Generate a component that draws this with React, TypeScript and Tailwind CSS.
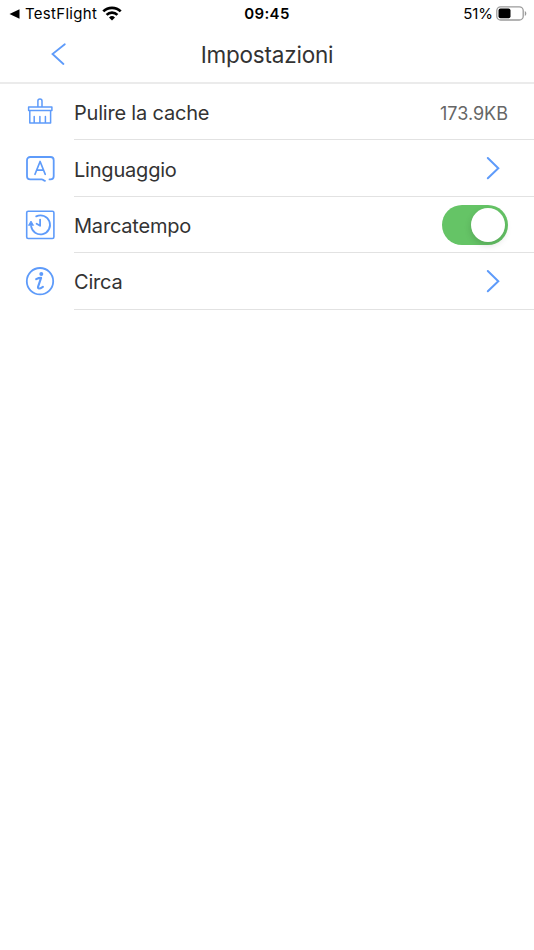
import { useState } from "react";
import type { ReactNode } from "react";

const BrushIcon = () => (
  <svg className="w-8 h-8" viewBox="0 0 32 32" fill="none" stroke="#5e9bfa" strokeWidth="1.5" strokeLinejoin="round" strokeLinecap="round">
    <path d="M13.900 11V5a2.050 2.050 0 0 1 4.100 0v6M4.600 11h23.300v3.500H4.600zM5.800 14.500V27h20.800V14.500M10.200 20.500v6M15.900 20.500v6M21.400 20.500v6" />
  </svg>
);

const LanguageIcon = () => (
  <svg className="w-8 h-8" viewBox="0 0 32 32" fill="none" stroke="#5e9bfa" strokeWidth="1.8" strokeLinejoin="round" strokeLinecap="round">
    <path d="M25.500 27.400h1a3.200 3.200 0 0 0 3.200-3.200V8.200A3.200 3.200 0 0 0 26.500 5H6.200A3.200 3.200 0 0 0 3 8.200v16a3.200 3.200 0 0 0 3.200 3.200h11.500c1.500 0 1.800 1.300 3.300 1.400" />
    <path d="M11 22.300l5.100-12.800 5.100 12.800M12.700 18.200h6.800" strokeWidth="1.700" />
  </svg>
);

const ClockIcon = () => (
  <svg className="w-8 h-8" viewBox="0 0 32 32" fill="none" stroke="#5e9bfa" strokeWidth="1.6" strokeLinejoin="round" strokeLinecap="round">
    <rect x="2.700" y="2.300" width="27.200" height="27.200" rx="1.500" />
    <path d="M12.200 7.400A9.500 9.500 0 1 1 7.100 17.100" strokeWidth="1.800" />
    <path d="M4.600 16.100l2.400-4.100 2.400 4.100z" fill="#5e9bfa" strokeWidth="0.800" />
    <path d="M16.100 10.600v6.200l-3.500-2" strokeWidth="1.800" />
  </svg>
);

const InfoIcon = () => (
  <svg className="w-8 h-8" viewBox="0 0 32 32" fill="none" stroke="#5e9bfa" strokeWidth="1.800" strokeLinejoin="round" strokeLinecap="round">
    <circle cx="16" cy="16.200" r="13.200" />
    <circle cx="17.300" cy="8.900" r="2" fill="#5e9bfa" stroke="none" />
    <path d="M12.200 14.200c1.600-.9 3.300-1.300 4.900-1.300l-3 8.700c-.6 2.300 1 2.700 4.800.2" strokeWidth="2.100" />
  </svg>
);

const Chevron = () => (
  <svg className="w-4 h-6 mr-[7px]" viewBox="0 0 16 24" fill="none" stroke="#5e9bfa" strokeWidth="2" strokeLinecap="round">
    <path d="M2.800 2l10.500 10.200L2.800 22.300" />
  </svg>
);

const Row = ({ icon, label, children }: { icon: ReactNode; label: string; children: ReactNode }) => (
  <li className="flex h-[56.400px] pl-6">
    <div className="w-[50px] pt-3 shrink-0">{icon}</div>
    <div className="flex flex-1 items-center justify-between border-b border-[#e2e2e2] pr-[26px]">
      <span className="text-[20px] tracking-[-0.200px] text-[#333] pt-[3px]">{label}</span>
      {children}
    </div>
  </li>
);

const StatusBar = () => (
  <div className="grid grid-cols-3 items-center h-7 pl-[9px] pr-[7px] text-black">
    <div className="flex items-center">
      <svg className="w-[11px] h-[10px] mr-[5px]" viewBox="0 0 11 10">
        <path d="M.5 5L10.500.3v9.400z" />
      </svg>
      <span className="text-[15px] tracking-[0.300px]">TestFlight</span>
      <svg className="w-5 h-[15px] ml-[5px] -mt-0.5" viewBox="0 0 20 15" fill="none" stroke="#000" strokeWidth="2.700">
        <path d="M1.300 5.400a12.300 12.300 0 0 1 17.400 0M4.600 8.900a7.700 7.700 0 0 1 10.800 0" />
        <path d="M10 14.500l-3-3a4.300 4.300 0 0 1 6 0z" fill="#000" stroke="none" />
      </svg>
    </div>
    <span className="text-center text-[15px] font-semibold tracking-[0.400px] -ml-0.5">09:45</span>
    <div className="flex items-center justify-end">
      <span className="text-[15px] tracking-[-0.100px]">51%</span>
      <svg className="w-[31px] h-[15px] ml-[3px] -mt-0.5" viewBox="0 0 31 15">
        <rect x=".8" y=".8" width="26.400" height="13.200" rx="3.800" fill="none" stroke="#9b9b9b" strokeWidth="1.300" />
        <rect x="2.500" y="2.500" width="12" height="9.800" rx="2" />
        <path d="M28.800 5v5c2-.8 2-4.200 0-5z" fill="#9b9b9b" />
      </svg>
    </div>
  </div>
);

export default function App() {
  const [timestamp, setTimestamp] = useState(true);

  return (
    <div className="min-h-screen bg-white font-['Inter','Liberation_Sans',sans-serif]">
      <StatusBar />
      <header className="grid grid-cols-[1fr_auto_1fr] items-center h-14 pb-0.5 border-b-2 border-[#ebebeb]">
        <button className="ml-[50px] w-4" aria-label="Indietro">
          <svg className="w-4 h-6" viewBox="0 0 16 24" fill="none" stroke="#5e9bfa" strokeWidth="1.800" strokeLinecap="round">
            <path d="M14.800 2.200L2.500 12l10.900 10" />
          </svg>
        </button>
        <h1 className="text-[22.500px] tracking-[-0.200px] text-[#333] pt-px">Impostazioni</h1>
      </header>

      <ul>
        <Row icon={<BrushIcon />} label="Pulire la cache">
          <span className="text-[18px] text-[#666] pt-[3px]">173.9KB</span>
        </Row>
        <Row icon={<LanguageIcon />} label="Linguaggio">
          <Chevron />
        </Row>
        <Row icon={<ClockIcon />} label="Marcatempo">
          <button
            role="switch"
            aria-checked={timestamp}
            aria-label="Marcatempo"
            onClick={() => setTimestamp(!timestamp)}
            className={`flex w-[66px] h-10 mt-px p-[3px] rounded-full ${timestamp ? "justify-end bg-[#65c466]" : "bg-[#e9e9ea]"}`}
          >
            <span className="size-[34px] rounded-full bg-white shadow-[0_3px_7px_rgba(0,0,0,0.15)]" />
          </button>
        </Row>
        <Row icon={<InfoIcon />} label="Circa">
          <Chevron />
        </Row>
      </ul>
    </div>
  );
}
